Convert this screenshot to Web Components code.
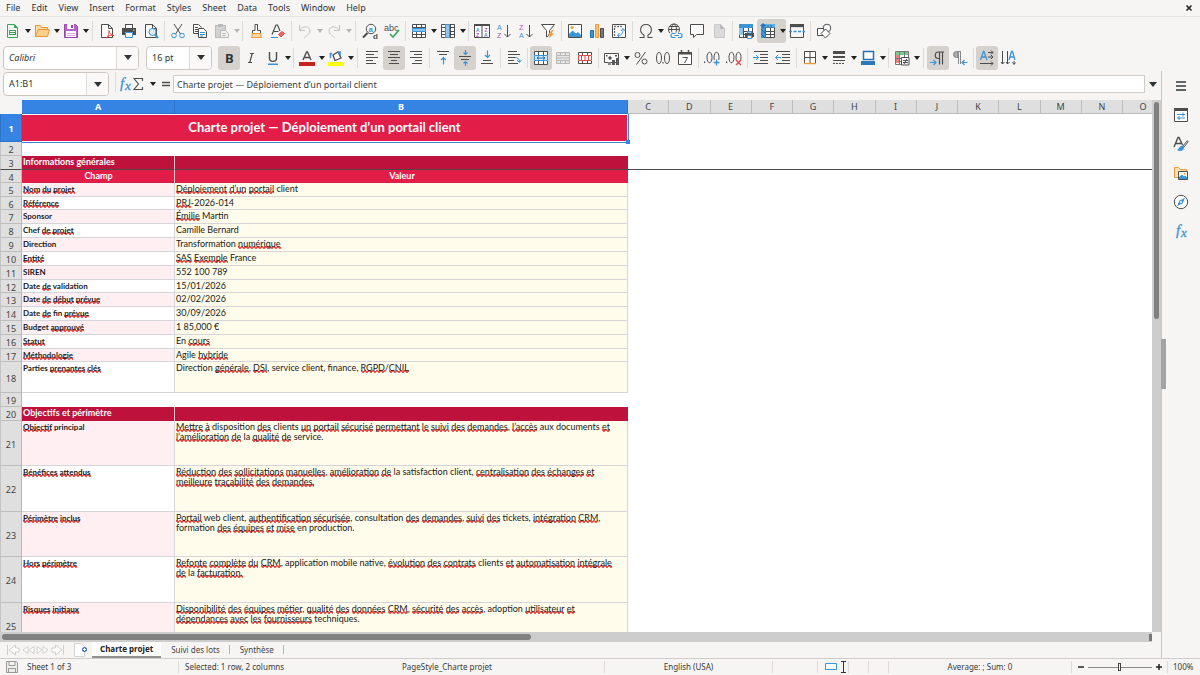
<!DOCTYPE html>
<html lang="en">
<head>
<meta charset="utf-8">
<meta name="viewport" content="width=device-width, initial-scale=1">
<title>Charte projet — Calc</title>
<style>
html, body { margin: 0; height: 100%; }
body { font: 9px/12px "Noto Sans", "Open Sans", sans-serif; color: #2e3436; background: #f6f5f4; overflow: hidden; }
</style>
</head>
<body>
<calc-app></calc-app>
<script>
const G = '#4d4d4d', B = '#3a94d6', O = '#ee9a3a', P = '#b04fc4', R = '#e0484a', L = '#b9b9b9';
const p = (d, c = G, f = 'none', w = 1) => `<path d="${d}" stroke="${c}" fill="${f}" stroke-width="${w}"/>`;
const f = (d, c = G) => `<path d="${d}" fill="${c}"/>`;
const t = (x, y, s, c, z = 8, w = 400) => `<text x="${x}" y="${y}" font-size="${z}" font-weight="${w}" fill="${c}" font-family="Liberation Sans, sans-serif">${s}</text>`;
const page = (c = G, fill = '#fff') => p('M2.500 1.500H9.500L13.500 5.500V14.500H2.500Z', c, fill) + p('M9.500 1.500V5.500H13.500', c);
const grid = (c = G) => p('M1.500 1.500H14.500V14.500H1.500ZM1.500 4.500H14.500M1.500 8.500H14.500M1.500 11.500H14.500M5.500 1.500V14.500M10.500 1.500V14.500', c, '#fff');
const mergeGrid = (c, m, fill) => p('M1.500 2.500H14.500V13.500H1.500ZM5.500 2.500V13.500M10.500 2.500V13.500', c, fill) + f('M1 5H15V11H1Z', fill) + p('M1.500 5.500H14.500V10.500H1.500Z', m);
const ICONS = {
  new: p('M2.500 1.500H9.500L12.500 4.500V14.500H2.500Z', '#3aa65a', '#eef8f0') + f('M9 1V5H13Z', '#3aa65a') + f('M4 7H11V12H4Z', '#3aa65a') + p('M5 8.500H10M5 10.500H10', '#fff'),
  open: p('M1.500 13.500V2.500H6.500L7.500 4.500H13.500V6.500', '#e8963a', '#f9d9a0') + p('M1.500 13.500L4.500 6.500H15.500L13.500 13.500Z', '#e8963a', '#fbd08a'),
  save: p('M1.500 1.500H12.500L14.500 3.500V14.500H1.500Z', '#9b45b0', '#b763cb') + f('M4 1H11V6H4Z', '#fff') + f('M8 2H10V5H8Z', '#9b45b0') + f('M3 8H13V14H3Z', '#fff') + p('M4 10.500H12M4 12.500H12', '#d8a5e3'),
  pdf: page() + p('M7 15C10 13 10 10 10 7.500C11 11 12 12.500 15 12.500C11 12 9 13 7 15', R),
  print: f('M4 1H12V5H4Z') + f('M5 2H11V5H5Z', '#fff') + f('M1 5H15V12H1Z') + f('M4 9H12V15H4Z', '#fff') + p('M4.500 9.500H11.500V14.500H4.500Z', B) + f('M12 6.500H13.500V8H12Z', '#7cc36b'),
  preview: page() + `<circle cx="9.500" cy="9" r="3.500" fill="#d9edfb" stroke="${B}"/>` + p('M12 11.500L15 15', B, 'none', 2),
  cut: p('M4 1L10.500 11M12 1L5.500 11') + `<circle cx="4" cy="12.500" r="2.300" fill="none" stroke="${B}"/><circle cx="12" cy="12.500" r="2.300" fill="none" stroke="${B}"/>`,
  copy: p('M1.500 1.500H6.500L9.500 4.500V10.500H1.500Z', G, '#fff') + p('M3 4.500H6M3 6.500H6M3 8.500H6') + p('M6.500 5.500H11.500L14.500 8.500V14.500H6.500Z', G, '#fff') + p('M8 9.500H13M8 11.500H13M8 13H11', B),
  paste: p('M1.500 2.500H11.500V14.500H1.500Z', L, '#d2d2d2') + f('M4 1H9V4H4Z', L) + p('M6.500 7.500H11.500L14.500 10.500V14.500H6.500Z', L, '#f3f3f3') + p('M8 10.500H12M8 12.500H12', L),
  brush: p('M7 1.500H9.500V7.500H12.500V10.500H4.500V7.500H7Z', G, '#fff') + p('M4.500 10.500L3.500 14.500H13.500L12.500 10.500Z', O, '#fbd9a4'),
  clear: p('M2 11.500L6 2H7.500L10 8M4 8.500H8.500', G, 'none', 1.2) + f('M1 14H8V15H1Z', B) + p('M8.500 11.500L12 8.500L14.500 10.500L11 14Z', R, '#ee6c6c'),
  undo: p('M2.500 2V7.500H8M3 7C5 3 13 2.500 13 8C13 11 9 13 7 15', '#c4c4c4'),
  redo: p('M13.500 2V7.500H8M13 7C11 3 3 2.500 3 8C3 11 7 13 9 15', '#c4c4c4'),
  find: `<circle cx="9" cy="6" r="4.700" fill="#fff" stroke="${G}"/>` + t(6.5, 8.5, 'a', B, 8, 700) + p('M5.500 10L1 14.500', G, 'none', 2) + t(11, 15.500, 'd', G, 8, 700),
  spell: t(0, 7.500, 'abc', G, 9) + p('M6 11L9 14L15 7', '#37ab63', 'none', 1.7),
  row: grid() + f('M1 5H15V9H1Z', '#8cc6f0') + p('M1.500 5.500H14.500V8.500H1.500Z', B),
  col: grid() + f('M5 1H10V15H5Z', '#8cc6f0') + p('M5.500 1.500H9.500V14.500H5.500Z', B),
  sort: p('M.500 1.500H15.500V14.500H.500Z', G, '#fff') + f('M0 1H16V3H0Z') + p('M8 2V14') + t(2, 8.500, 'A', B, 5, 700) + t(2, 14, 'Z', P, 5, 700) + t(10.500, 8.500, 'Z', P, 5, 700) + t(10, 14, 'A', B, 5, 700),
  az: t(1, 7, 'A', B, 7) + t(1, 15, 'Z', P, 7) + p('M11.500 2V14M8.500 11L11.500 14L14.500 11'),
  za: t(1, 7, 'Z', P, 7) + t(1, 15, 'A', B, 7) + p('M11.500 2V14M8.500 11L11.500 14L14.500 11'),
  filter: p('M1.500 1.500H14.500L9.500 7.500V12L6.500 14V7.500Z', G, '#fff') + f('M12 7L7.500 12H10L9 15.500L14 10.500H11.500L13.500 7Z', O),
  image: p('M1.500 1.500H14.500V14.500H1.500Z', G, '#fff') + f('M2 14V11L5.500 7.500L9 10.500L11 9L14 12V14Z', B) + `<circle cx="5" cy="4.500" r="1.500" fill="${O}"/>`,
  chart: p('M1.500 7.500H4.500V14.500H1.500Z', '#2372b0', B) + p('M6.500 1.500H9.500V14.500H6.500Z', O, '#f9c273') + p('M11.500 5.500H14.500V14.500H11.500Z', G, '#7a7a7a'),
  pivot: p('M1.500 1.500H14.500V14.500H1.500Z', G, '#fff') + p('M3 3.500H5M6 3.500H8M9 3.500H11M3.500 5V7M3.500 8V10M3.500 11V13', '#777', 'none', 1.5) + p('M7 12.500C11 12.500 12 10 12 6M10 8L12 5.500L14 8M8.500 10L6.500 12.500L8.500 14.500', B),
  omega: p('M1.500 14.500H6V12C1 9.500 1.500 1.500 8 1.500S15 9.500 10 12V14.500H14.500', G, 'none', 1.1),
  link: `<circle cx="7" cy="6.500" r="5.500" fill="none" stroke="${G}"/><ellipse cx="7" cy="6.500" rx="2.500" ry="5.500" fill="none" stroke="${G}"/>` + p('M1.500 6.500H12.500M2.500 3.500H11.500') + p('M3 10H14V15H3Z', '#f6f5f4', '#f6f5f4') + p('M8.500 10.500H6A2 2 0 0 0 6 14.500H8.500M11 10.500H13A2 2 0 0 1 13 14.500H11M7.500 12.500H12', B, 'none', 1.2),
  comment: p('M1.500 1.500H14.500V11.500H7.500L4.500 14.500V11.500H1.500Z', G, '#fff'),
  pagehf: p('M3.500 1.500H9.500L13.500 5.500V14.500H3.500Z', '#c9c9c9', '#dadada') + f('M9 1V6H14Z', '#bbb'),
  area: grid() + f('M1 1H15V5H1Z', B) + f('M1 5H5V12H1Z', '#8cc6f0') + f('M7 10H16V14H7Z') + p('M9.500 8.500H13.500V10H9.500ZM9.500 12.500H13.500V15.500H9.500Z', B, '#fff'),
  freeze: grid() + f('M1 1H15V4.500H1Z', '#60aee6') + f('M1 1H5.500V15H1Z', B) + p('M3 0V5M.500 2.500H5.500M1 6L5 10M1 11L5 15M8 2V4M11 2V4', '#1b6fae'),
  split: f('M1 1H15V5H1Z') + f('M2 4H14V5H2Z', '#ddd') + p('M1.500 5V14.500H14.500V5', G) + p('M0 8.500H16', B, 'none', 1.500).replace('/>', ' stroke-dasharray="3 1.500"/>'),
  shapes: p('M1.500 5.500H9.500V12.500H1.500Z', G, '#fff') + `<circle cx="11" cy="5" r="3.800" fill="#fff" stroke="${G}"/>` + p('M9.500 6L14 10.500L9.500 15L5 10.500Z', G, '#fff'),
  bold: `<text x="4" y="13" font-size="13" font-weight="700" fill="#2e3436" font-family="Noto Sans, sans-serif">B</text>`,
  italic: p('M7 3.500H11M5 12.500H9M9.200 3.500L6.800 12.500', G, 'none', 1.2),
  underline: p('M4.500 2V8C4.500 12.500 11.500 12.500 11.500 8V2', G, 'none', 1.4) + f('M3 13.500H13V15H3Z', B),
  fontcolor: p('M4 10L7.500 2H8.500L12 10M5.500 7.500H10.500', G, 'none', 1.4) + f('M0 12H16V16H0Z', '#c9211e'),
  highlight: p('M5 5L10 2L13 8L7 10.500Z', G, '#fff', 1.3) + p('M4 3.500H2.500V8M10 2L12 4V1', B, 'none', 1.6) + f('M0 12H16V16H0Z', '#ffff00'),
  left: p('M2 1.500H14M2 4.500H10M2 7.500H14M2 10.500H9M2 13.500H12'),
  center: p('M2 1.500H14M4 4.500H12M2 7.500H14M5 10.500H11M3 13.500H13'),
  right: p('M2 1.500H14M6 4.500H14M2 7.500H14M7 10.500H14M4 13.500H14'),
  vtop: p('M2 1.500H14M4 4.500H12') + p('M8.500 14.500V8M6 10L8.500 7.500L11 10', B, 'none', 1.200),
  vmid: p('M2 6.500H14M4 9.500H12') + p('M8.500 0V4.500M6.500 2.500L8.500 4.500L10.500 2.500M8.500 16V12M6.500 13.500L8.500 11.500L10.500 13.500', B, 'none', 1.200),
  vbot: p('M2 13.500H14M4 10.500H12') + p('M8.500 .500V7.500M6 5L8.500 7.500L11 5', B, 'none', 1.200),
  wrap: p('M2 1.500H11M2 4.500H14M2 7.500H9M2 10.500H8M2 13.500H12') + p('M9 7.500C12 7.500 13.500 9 13.500 12M11 10L13.500 12.500L15.500 10', B),
  merge: p('M1.500 1.500H14.500V14.500H1.500ZM5.500 1.500V14.500M10.500 1.500V14.500', G, '#fff') + f('M1 5H15V11H1Z', '#cfe7f9') + p('M1.500 5.500H14.500V10.500H1.500Z', B) + p('M4 8H12M6 6.500L4 8L6 9.500M10 6.500L12 8L10 9.500', '#1b6fae'),
  mergeoff: mergeGrid(L, L, '#e4e4e4') + p('M1 8H15', L),
  unmerge: mergeGrid(G, R, '#fff') + p('M4.500 5V11M8 5V11M11.500 5V11', R),
  currency: p('M.500 3.500H14.500V12.500H.500Z', G, '#fff') + `<circle cx="6" cy="8" r="1.700" fill="${G}"/>` + f('M2 5H3.500V6.500H2ZM11 5H13V6.500H11Z') + f('M8 10H11V15H8ZM12 8H15V15H12Z', '#5a5a5a') + f('M4 12H7V15H4Z', '#888'),
  percent: `<circle cx="4.500" cy="5" r="2.500" fill="none" stroke="${G}"/><circle cx="11.500" cy="11.500" r="2.500" fill="none" stroke="${G}"/>` + p('M12.500 2L3.500 14.500'),
  number: p('M1.500 8C1.500 .500 6.500 .500 6.500 8S1.500 15.500 1.500 8M9.500 8C9.500 .500 14.500 .500 14.500 8S9.500 15.500 9.500 8') + f('M7.500 12H8.700V13.500H7.500Z'),
  date: p('M1.500 2.500H14.500V14.500H1.500Z', G, '#fff') + f('M1 2H15V4.500H1Z') + p('M4.500 0V4M11.500 0V4', G, 'none', 1.500) + p('M5.500 7.500H10.500L7.500 13'),
  decadd: f('M0 11.500H1.300V13H0Z') + p('M3 7.500C3 .500 8 .500 8 7.500S3 14.500 3 7.500M10 7.500C10 .500 15 .500 15 7.500S10 14.500 10 7.500') + f('M9 10H16V16H9Z', '#f6f5f4') + p('M12.500 9.500V15.500M9.500 12.500H15.500', B, 'none', 1.400),
  decdel: f('M0 11.500H1.300V13H0Z') + p('M3 7.500C3 .500 8 .500 8 7.500S3 14.500 3 7.500M10 7.500C10 .500 15 .500 15 7.500S10 14.500 10 7.500') + f('M9 10H16V16H9Z', '#f6f5f4') + p('M10 10L15 15M15 10L10 15', R, 'none', 1.400),
  indent: p('M1 1.500H15M7 4.500H15M7 7.500H15M7 10.500H15M1 13.500H15') + p('M0 7.500H5.500M3 5L5.500 7.500L3 10', B),
  outdent: p('M1 1.500H15M7 4.500H15M7 7.500H15M7 10.500H15M1 13.500H15') + p('M6 7.500H.500M3 5L.500 7.500L3 10', B),
  borders: p('M2.500 1.500H13.500V13.500H2.500ZM8 1.500V13.500M2.500 7.500H13.500', G, '#fff') + p('M2 13.500H14', O, 'none', 1.400),
  linestyle: f('M2 1H14V4H2ZM2 6H14V8H2Z') + p('M2 10.500H14') + p('M2 13.500H14').replace('/>', ' stroke-dasharray="2 1"/>'),
  linecolor: p('M3.500 1.500H13.500V9.500H3.500Z', '#2372b0', '#fff', 1.500) + f('M1 11H15V15H1Z', '#2a78b8'),
  cond: grid('#777') + f('M2 2H14V5H2Z', '#7fc98c') + f('M2 5H6V13H2Z', '#ea8080') + p('M5.500 2V14M10.500 2V7M2 8.500H7', '#777') + p('M7.500 7.500H15V15H7.500Z', G, '#fff') + p('M9 10.500H14M9 12.500H14M13 9L10 14'),
  ltr: p('M14 2H8.500A3 3 0 0 0 8.500 8.500H9.500M9.500 2V14.500M12.500 2V14.500', G, 'none', 1.200) + p('M0 12.500H6M3.500 10L6 12.500L3.500 15', B, 'none', 1.200),
  rtl: p('M9 1.500H4.500A3 3 0 0 0 4.500 7.500H6V1.500M6.500 2V14M8.500 2V14', '#888', '#aaa') + p('M15.500 12.500H10M12.500 10L10 12.500L12.500 15', B, 'none', 1.200),
  lrtb: p('M1.500 10L4.500 1.500H5L8 10M2.500 7H7', B, 'none', 1.300) + p('M9 2.500H14M12 .500L14 2.500L12 4.500M9 7H14M12 5L14 7L12 9M1 13.500H14M12 11.500L14 13.500L12 15.500'),
  tbrl: p('M8 10L10.500 1.500H11.500L14 10M9 7H13', B, 'none', 1.300) + p('M1.500 1V14M0 12L1.500 14L3.500 12M6.500 1V14M5 12L6.500 14L8.500 12M13 11V14M11.500 12.500L13 14.500L14.500 12.500'),
  fx: `<text x="3" y="12" font-size="15" font-style="italic" fill="${B}" stroke="${B}" stroke-width=".3" font-family="Liberation Serif, serif">f</text><text x="8" y="14" font-size="13" font-style="italic" fill="${B}" stroke="${B}" stroke-width=".3" font-family="Liberation Serif, serif">x</text>`,
  sigma: p('M12.500 5V2.500H4L8.500 8L4 13.500H12.500V11', G, 'none', 1.100),
  equals: p('M4 6.500H12M4 9.500H12', G, 'none', 1.500),
  menu: p('M3 4H13M3 8H13M3 12H13', '#2e3436', 'none', 1.300),
  props: p('M1.500 1.500H14.500V14.500H1.500Z', G, '#fff') + f('M1 1H15V4H1Z') + p('M4 7.500H12M10 5.500V9.500', B) + p('M4 11H12M6 9V13', B),
  styles: p('M1 11L5 1.500H6L9.500 9M2.500 7.500H8', G, 'none', 1.400) + p('M15 5L9.500 11.500', G, 'none', 2) + p('M14.500 5.500L10.500 10.500', '#fff', 'none', .8) + f('M10 10C7 9 6 13 4 14C7 16 11 15 11 11.500Z', B),
  gallery: p('M1.500 12.500V2.500H5.500L7.500 4.500H13.500V7M1.500 12.500H5', O, '#fbe0b8') + p('M5.500 6.500H14.500V14.500H5.500Z', G, '#fff') + f('M6 14V12L9 9.500L11 11.500L12 10.500L14 12.500V14Z', B) + f('M11 8H12.500V9.500H11Z', O),
  compass: `<circle cx="8" cy="8" r="6.700" fill="#fff" stroke="${G}"/>` + f('M12 4L9.500 9.500L4 12L6.500 6.500Z', B) + `<circle cx="8" cy="8" r="1" fill="#fff"/>`,
  savestate: p('M2.500 2.500H12.500L13.500 3.500V13.500H2.500ZM5 3V6.500H11V3M4.500 13V9.500H11.500V13', '#999', '#eee'),
  newsheet: p('M.500 1.500H7.500L10.500 4.500V14.500H.500Z', '#d2d2d2', '#fff') + `<circle cx="10.500" cy="7.500" r="2.500" fill="#3a74b8"/>` + p('M9 7.500H12M10.500 6V9', '#fff'),
  first: p('M2.500 3V13M10.500 3L4 8L10.500 13V10L14 10V6L10.500 6Z', '#cfcfcf', '#fff'),
  prev: p('M8 4.500L3 8L8 11.500ZM14 4.500L9 8L14 11.500Z', '#cfcfcf', '#fff'),
  next: p('M2 4.500L7 8L2 11.500ZM8 4.500L13 8L8 11.500Z', '#cfcfcf', '#fff'),
  last: p('M13.500 3V13M5.500 3L12 8L5.500 13V10L2 10V6L5.500 6Z', '#cfcfcf', '#fff'),
  selrect: p('M1.500 4.500H12.500V10.500H1.500Z', B, '#fff'),
  ibeam: p('M1 2.500H6M1 13.500H6M3.500 2.500V13.500', '#333'),
};
const svg = (n, w = 16) => `<svg viewBox="0 0 ${w} 16" width="${w}" height="16" aria-hidden="true">${ICONS[n]}</svg>`;
const RESET = `*{box-sizing:border-box}button{appearance:none;border:0;margin:0;padding:0;background:none;font:inherit;color:inherit}svg{display:block;flex:none;overflow:visible}`;
const define = (name, css, html) => customElements.define(name, class extends HTMLElement {
  constructor() { super(); this.attachShadow({ mode: 'open' }); }
  connectedCallback() {
    const body = typeof html === 'function' ? html(this) : html;
    this.shadowRoot.innerHTML = `<style>${RESET}${css}</style>${body}`;
  }
});

define('tool-button', `
:host{display:flex;flex:none;height:24px;border-radius:3px}
:host([pressed]){background:#d5d1cd}
button{width:22px;display:grid;place-items:center;height:24px}
.more{width:7px}
.more::before{content:"";border:3px solid transparent;border-top:4px solid #222;border-bottom:0}
:host([disabled]) .more::before{border-top-color:#b5b5b5}`,
h => {
  const dis = h.hasAttribute('disabled') ? 'disabled' : '';
  return `<button type="button" ${dis} aria-label="${h.getAttribute('label')}">${svg(h.getAttribute('icon'))}</button>` +
    (h.hasAttribute('menu') ? `<button type="button" ${dis} class="more" aria-label="${h.getAttribute('label')} options"></button>` : '');
});

define('tool-sep', `:host{display:block;flex:none;width:5px;height:20px;background:linear-gradient(#dddbd8,#dddbd8) center/1px 100% no-repeat}:host([wide]){width:7px}`, '');

define('combo-box', `
:host{display:block;flex:none;height:24px}
:host([italic]){font-style:italic}
label{display:block;position:relative;height:24px;border:1px solid #cdc7c2;border-radius:4px;background:#fff;overflow:hidden}
select{appearance:none;border:0;outline:0;background:none;font:inherit;color:#2e3436;width:100%;height:22px;padding:0 24px 0 5px;display:block}
.arrow{position:absolute;right:0;top:0;width:22px;height:22px;border-left:1px solid #dcd8d4;background:#faf9f8;display:grid;place-items:center;pointer-events:none}
.arrow::before{content:"";border:4px solid transparent;border-top:5px solid #2e3436;border-bottom:0}`,
h => `<label><select aria-label="${h.getAttribute('label')}"><option>${h.getAttribute('value')}</option></select><span class="arrow"></span></label>`);

define('tool-bar', `:host{display:flex;align-items:center;height:27px;padding-left:2px;overflow:hidden}`, '<slot></slot>');

define('menu-bar', `
:host{display:flex;align-items:center;height:17px;padding:0 6px;gap:11px;border-bottom:1px solid #e6e4e2}
.close{margin-left:auto}`,
['File', 'Edit', 'View', 'Insert', 'Format', 'Styles', 'Sheet', 'Data', 'Tools', 'Window', 'Help'].map(m => `<button type="button">${m}</button>`).join('') +
'<button type="button" class="close" aria-label="Close"><svg width="9" height="8" viewBox="0 0 9 8"><path d="M1.500 1.500L6.500 6.500M6.500 1.500L1.500 6.500" stroke="#222" stroke-width="1.600"/></svg></button>');

define('formula-bar', `
:host{display:flex;align-items:center;height:26px;padding-left:3px;flex:none}
combo-box{width:106px}
.fn{display:flex;margin-left:4px}
.fn tool-button{margin:0 -4px}
.fn .sigma{margin:0 3px 0 -5px}
input{flex:1;min-width:0;height:18px;border:1px solid #cfcbc8;background:#fff;font:inherit;color:#3a3a3a;padding:0 3px;outline:0}
.drop{width:16px;display:grid;place-items:center;height:18px}
.drop::before{content:"";border:4px solid transparent;border-top:5px solid #2e3436;border-bottom:0}`,
`<combo-box label="Name Box" value="A1:B1"></combo-box><span class="fn"><tool-sep></tool-sep>
<tool-button icon="fx" label="Function Wizard"></tool-button><tool-button class="sigma" icon="sigma" label="Select Function" menu></tool-button><tool-button icon="equals" label="Formula"></tool-button></span>
<input aria-label="Input line" value="Charte projet — Déploiement d’un portail client"><button type="button" class="drop" aria-label="Expand Formula Bar"></button>`);

const mark = s => s.replace(/_([^_]+)_/g, '<u>$1</u>').replace(/\n/g, '<br>');
const ROWS = [
  [14], [14, 'sec', 'Informations générales', ''], [13, 'th', 'Champ', 'Valeur'],
  [14, 'd', '_Nom_ _du_ _projet_', '_Déploiement_ _d’un_ _portail_ client'],
  [13, 'd', '_Référence_', '_PRJ_-2026-014'],
  [14, 'd', 'Sponsor', '_Émilie_ Martin'],
  [14, 'd', 'Chef _de_ _projet_', 'Camille Bernard'],
  [14, 'd', 'Direction', 'Transformation _numérique_'],
  [14, 'd', '_Entité_', '_SAS_ _Exemple_ France'],
  [14, 'd', 'SIREN', '552 100 789'],
  [13, 'd', 'Date _de_ validation', '15/01/2026'],
  [14, 'd', 'Date _de_ _début_ _prévue_', '02/02/2026'],
  [14, 'd', 'Date _de_ fin _prévue_', '30/09/2026'],
  [14, 'd', 'Budget _approuvé_', '1 85,000 €'],
  [14, 'd', '_Statut_', 'En _cours_'],
  [13, 'd', '_Méthodologie_', 'Agile _hybride_'],
  [31, 'd', 'Parties _prenantes_ _clés_', 'Direction _générale_, _DSI_, service client, finance, _RGPD_/_CNIL_'],
  [14], [14, 'sec', 'Objectifs et périmètre', ''],
  [45, 'd', '_Objectif_ principal', '_Mettre_ _à_ disposition _des_ clients _un_ _portail_ _sécurisé_ _permettant_ _le_ _suivi_ _des_ _demandes_, _l’accès_ aux documents _et_\n_l’amélioration_ _de_ la _qualité_ _de_ service.'],
  [46, 'd', '_Bénéfices_ _attendus_', '_Réduction_ _des_ _sollicitations_ _manuelles_, _amélioration_ _de_ la satisfaction client, _centralisation_ _des_ _échanges_ _et_\n_meilleure_ _traçabilité_ _des_ _demandes._'],
  [45, 'd', '_Périmètre_ _inclus_', '_Portail_ web client, _authentification_ _sécurisée_, consultation _des_ _demandes_, _suivi_ _des_ tickets, _intégration_ _CRM_,\nformation _des_ _équipes_ _et_ _mise_ en production.'],
  [46, 'd', '_Hors_ _périmètre_', '_Refonte_ _complète_ _du_ _CRM_, application mobile native, _évolution_ _des_ _contrats_ clients _et_ _automatisation_ _intégrale_\n_de_ la _facturation._'],
  [46, 'd', '_Risques_ _initiaux_', '_Disponibilité_ _des_ _équipes_ _métier_, _qualité_ _des_ _données_ _CRM_, _sécurité_ _des_ _accès_, adoption _utilisateur_ _et_\n_dépendances_ _avec_ _les_ _fournisseurs_ techniques.'],
];
const LETTERS = [...'CDEFGHIJKLMNO'];
const row = ([h, kind, a, b], i) => {
  const n = i + 2, tint = kind === 'd' && n % 2 ? ' tint' : '';
  return `<tr class="${kind || 'blank'}${n === 3 ? ' frozen' : ''}" style="height:${h}px"><th scope="row">${n}</th>` +
    (kind ? `<td class="a${tint}"><div>${mark(a)}</div></td><td class="b"><div>${mark(b)}</div></td>` : '<td></td><td></td>') +
    `<td class="rest" colspan="13"></td></tr>`;
};
const WAVE = `url("data:image/svg+xml,%3Csvg xmlns='http://www.w3.org/2000/svg' width='4' height='3'%3E%3Cpath d='M-1 1.500L0 .500L2 2.500L4 .500L5 1.500' fill='none' stroke='%23df2a26' stroke-width='1.1'/%3E%3C/svg%3E")`;
define('sheet-grid', `
:host{display:block;flex:1;min-height:0;overflow:hidden;background:#fff}
table{border-collapse:separate;border-spacing:0;table-layout:fixed;width:calc(100% + 12px)}
.cr{width:22px}.ca{width:153px}.cb{width:453px}.co{width:41px}
th,td{padding:0;font-weight:400;overflow:hidden;white-space:nowrap}
thead th{height:14px;line-height:12px;background:#dfdfdf;border-right:1px solid #bdbdbd;border-bottom:1px solid #bdbdbd;color:#444;text-align:center}
thead .on,tbody .on{background:#3584e4;color:#fff;font-weight:700;border-color:#2c74cc}
thead .corner{background:#f6f5f4;border-color:#f6f5f4}
tbody th{background:#dfdfdf;border-right:1px solid #b8b8b8;border-left:1px solid #c4c4c4;border-bottom:1px solid #bdbdbd;color:#444;vertical-align:middle;line-height:9px;padding-top:2px;text-align:center}
td{font-family:Lato,"Liberation Sans",sans-serif;vertical-align:top;color:#1a1a1a}
td div{line-height:11px;padding-left:1px;height:12px}
.d td{border-bottom:1px solid #d6d6da;border-right:1px solid #d6d6da}
.d td div{line-height:10px;padding-top:1px}
.d .a{font-weight:700;font-size:8px}
.d .b div{height:auto}
.a.tint{background:#ffeef2}
.d .b{background:#fffceb}
.d .rest,.blank td{border:0}
.sec td{background:#be123c;color:#fff;font-weight:700}
.th td{background:#e11d48;color:#fff;font-weight:700;text-align:center}
.sec .a,.th .a{border-right:1px solid #ecc3cd}
.sec .rest,.th .rest{background:#fff}
.frozen td,.frozen th{border-bottom:1px solid #4a4a4a}
.title{position:relative;background:#e11d48;color:#fff;font-size:13px;font-weight:700;text-align:center;vertical-align:middle;border:1px solid #fff;border-width:1px 1px 1px 0;box-shadow:0 1px #3584e4,1px 0 #3584e4;overflow:visible}
.title div{line-height:23px;height:24px;padding:0}
.title::after{content:"";position:absolute;right:-3px;bottom:-3px;width:4px;height:4px;background:#3584e4}
u{text-decoration:none;background:${WAVE} left bottom/4px 3px repeat-x}`,
`<table><colgroup><col class="cr"><col class="ca"><col class="cb">${LETTERS.map(l => `<col${l === 'O' ? ' class="co"' : ''}>`).join('')}</colgroup>
<thead><tr><th class="corner"></th><th class="on" scope="col">A</th><th class="on" scope="col">B</th>${LETTERS.map(l => `<th scope="col">${l}</th>`).join('')}</tr></thead>
<tbody><tr style="height:28px"><th class="on" scope="row">1</th><td class="title" colspan="2"><div>Charte projet — Déploiement d’un portail client</div></td><td colspan="13"></td></tr>${ROWS.map(row).join('')}</tbody></table>`);

define('scroll-bar', `
:host{display:block;flex:none;background:#cdcdcd}
i{display:block;background:#808080;border-radius:3px}
:host([vertical]){width:9px;padding:2px 2px 0}
:host([vertical]) i{width:5px;height:41%}
:host([horizontal]){height:10px;padding:2px 0 0 2px;display:flex;justify-content:space-between}
:host([horizontal]) i{height:6px;width:46%}
:host([horizontal])::after{content:"";width:3px;height:7px;background:#777}`, '<i></i>');

define('sheet-tabs', `
:host{display:flex;height:16px;align-items:stretch;font-size:8px;color:#444;padding-left:5px;flex:none}
.nav{width:15px;overflow:hidden;display:grid;place-items:center}
.add{width:20px;margin-left:7px;display:grid;place-items:center}
[role=tab]{padding:0 10px;line-height:12px;position:relative}
[role=tab]:not(:first-of-type)::after{content:"";position:absolute;right:0;top:3px;height:9px;width:1px;background:#b5b2b0}
[role=tab][aria-selected]{padding:0 8px;background:#fff;border-bottom:2px solid #919191;font-weight:700;color:#222}
div{display:flex}`,
['first', 'prev', 'next', 'last'].map(n => `<button type="button" class="nav" aria-label="${n} sheet" disabled>${svg(n)}</button>`).join('') +
`<button type="button" class="add" aria-label="Add sheet">${svg('newsheet')}</button><div role="tablist"><button type="button" role="tab" aria-selected="true">Charte projet</button><button type="button" role="tab">Suivi des lots</button><button type="button" role="tab">Synthèse</button></div>`);

define('side-bar', `
:host{display:flex;flex-direction:column;align-items:center;flex:none;width:39px;border-left:1px solid #c8c5c2;position:relative;padding-top:7px;gap:13px}
button{width:16px;height:16px}
.grip{position:absolute;left:-1px;top:268px;width:5px;height:50px;background:#a3a3a3}`,
[['menu', 'Sidebar Settings'], ['props', 'Properties'], ['styles', 'Styles'], ['gallery', 'Gallery'], ['compass', 'Navigator'], ['fx', 'Functions']].map(([n, l]) => `<button type="button" aria-label="${l}">${svg(n)}</button>`).join('') + '<span class="grip"></span>');

define('status-bar', `
:host{display:grid;grid-template-columns:178px 217fr 209fr 168fr 45px 31px 20px 20px 183fr 96px 33px;align-items:center;height:17px;border-top:1px solid #d0cdca;font-size:8px;color:#3a3a3a;flex:none}
span{display:flex;align-items:center;height:12px;white-space:nowrap;border-left:1px solid #dddad7;padding-left:6px}
.doc{border:0;gap:7px;padding-left:4px}
.plain{border-color:transparent}
.mid{justify-content:center;padding:0}
.zoom{padding:0 2px 0 3px;gap:1px}
.zoom button{width:12px;height:12px;display:grid;place-items:center}
input{appearance:none;flex:1;min-width:0;height:10px;margin:0;background:linear-gradient(#8a8a8a,#8a8a8a) center/100% 1px no-repeat}
input::-webkit-slider-thumb{appearance:none;width:3px;height:8px;background:#f6f5f4;border:1px solid #444}
.pct{padding-left:5px}`,
`<span class="doc">${svg('savestate')}Sheet 1 of 3</span><span>Selected: 1 row, 2 columns</span><span class="plain">PageStyle_Charte projet</span><span class="mid">English (USA)</span><span></span>
<span>${svg('selrect')}${svg('ibeam', 8)}</span><span></span><span></span><span class="mid">Average: ; Sum: 0</span>
<span class="zoom"><button type="button" aria-label="Zoom Out"><svg width="8" height="8"><path d="M1 4H7" stroke="#222" stroke-width="1.500"/></svg></button><input type="range" aria-label="Zoom" min="0" max="200" value="97"><button type="button" aria-label="Zoom In"><svg width="8" height="8"><path d="M1 4H7M4 1V7" stroke="#222" stroke-width="1.500"/></svg></button></span><span class="pct">100%</span>`);

const tb = s => s.trim().split(/\s+/).map(k => {
  if (k === '|') return '<tool-sep></tool-sep>';
  if (k === '||') return '<tool-sep wide></tool-sep>';
  const name = k.replace(/[^a-z]/g, '');
  return `<tool-button icon="${name}" label="${name}"${k.includes('+') ? ' menu' : ''}${k.includes('!') ? ' pressed' : ''}${k.includes('~') ? ' disabled' : ''}></tool-button>`;
}).join('');
define('calc-app', `
:host{display:flex;flex-direction:column;height:100vh}
header{flex:none;height:71px}
.work{flex:1;min-height:0;display:flex}
main{flex:1;min-width:0;display:flex;flex-direction:column}
.view{flex:1;min-height:0;display:flex;margin-top:3px}
.font{width:136px;margin-left:1px}.size{width:66px;margin:0 6px 0 7px}
sheet-grid{min-width:0}
scroll-bar[horizontal]{margin-right:9px}`,
`<header><menu-bar></menu-bar>
<tool-bar>${tb('new+ open+ save+ || pdf print preview | cut copy paste+~ | brush clear | undo+~ redo+~ || find spell | row+ col+ | sort az za filter | image chart pivot | omega+ link comment pagehf | area freeze+! split | shapes')}</tool-bar>
<tool-bar><combo-box class="font" italic label="Font Name" value="Calibri"></combo-box><combo-box class="size" label="Font Size" value="16 pt"></combo-box>${tb('bold! italic underline+ | fontcolor+ highlight+ || left center! right | vtop vmid! vbot | wrap | merge! mergeoff~ unmerge | currency+ percent number date | decadd decdel | indent outdent | borders+ linestyle+ linecolor+ | cond+ || ltr! rtl | lrtb! tbrl')}</tool-bar></header>
<div class="work"><main><formula-bar></formula-bar><div class="view"><sheet-grid></sheet-grid><scroll-bar vertical></scroll-bar></div><scroll-bar horizontal></scroll-bar><sheet-tabs></sheet-tabs></main><side-bar></side-bar></div>
<status-bar></status-bar>`);
</script>
</body>
</html>
